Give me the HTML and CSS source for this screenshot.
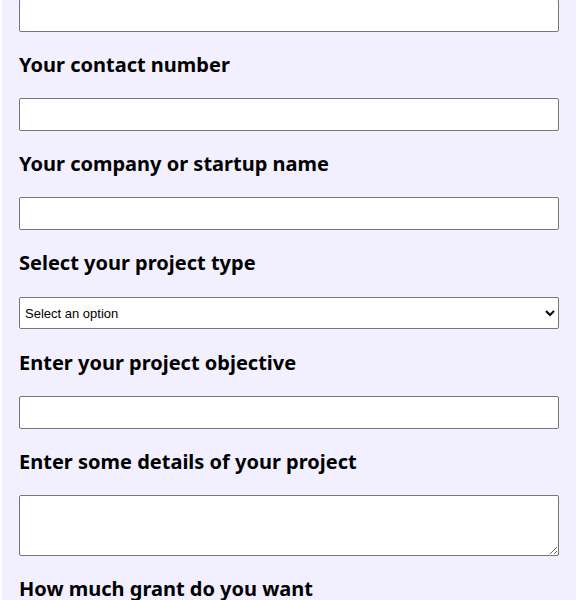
FILE: index.html
```html
<!DOCTYPE html>
<html lang="en">
<head>
    <meta charset="UTF-8">
    <meta name="viewport" content="width=device-width, initial-scale=1.0">
    <title>Grant Application</title>
    <link rel="stylesheet" href="styles.css">
</head>
<body>
    <form class="grant-form">
        <input type="email" name="email" class="field">

        <label class="field-label" for="phone">Your contact number</label>
        <input type="text" id="phone" name="phone" class="field">

        <label class="field-label" for="company">Your company or startup name</label>
        <input type="text" id="company" name="company" class="field">

        <label class="field-label" for="type">Select your project type</label>
        <select id="type" name="type" class="field field-select">
            <option>Select an option</option>
            <option>Research</option>
            <option>Product</option>
            <option>Community</option>
        </select>

        <label class="field-label" for="objective">Enter your project objective</label>
        <input type="text" id="objective" name="objective" class="field">

        <label class="field-label" for="details">Enter some details of your project</label>
        <textarea id="details" name="details" class="field field-area"></textarea>

        <label class="field-label" for="amount">How much grant do you want</label>
        <input type="text" id="amount" name="amount" class="field">
    </form>
</body>
</html>
```

FILE: styles.css
```css
body {
    margin: 0;
    padding: 0;
    background: #fff;
    font-family: 'Noto Sans', sans-serif;
    color: #000;
}

/* Form panel */
.grant-form {
    display: flex;
    flex-direction: column;
    margin: -1px 0 0 2px;
    padding: 0 17px 40px;
    background: #f2f0fe;
    min-height: 700px;
}

.field-label {
    display: block;
    margin: 19px 0 20px;
    font-size: 20px;
    font-weight: 700;
    line-height: 27px;
}

.field {
    box-sizing: border-box;
    width: 100%;
    height: 33px;
    margin: 0;
    padding: 4px 6px;
    border: 1px solid #767676;
    border-radius: 2px;
    background: #fff;
    font-family: 'Liberation Sans', Arial, sans-serif;
    font-size: 13px;
}

.field-select {
    height: 32px;
    margin: 1px 0;
    padding: 0 1px;
    color: #000;
}

.field-area {
    height: 61px;
    resize: vertical;
}
```
